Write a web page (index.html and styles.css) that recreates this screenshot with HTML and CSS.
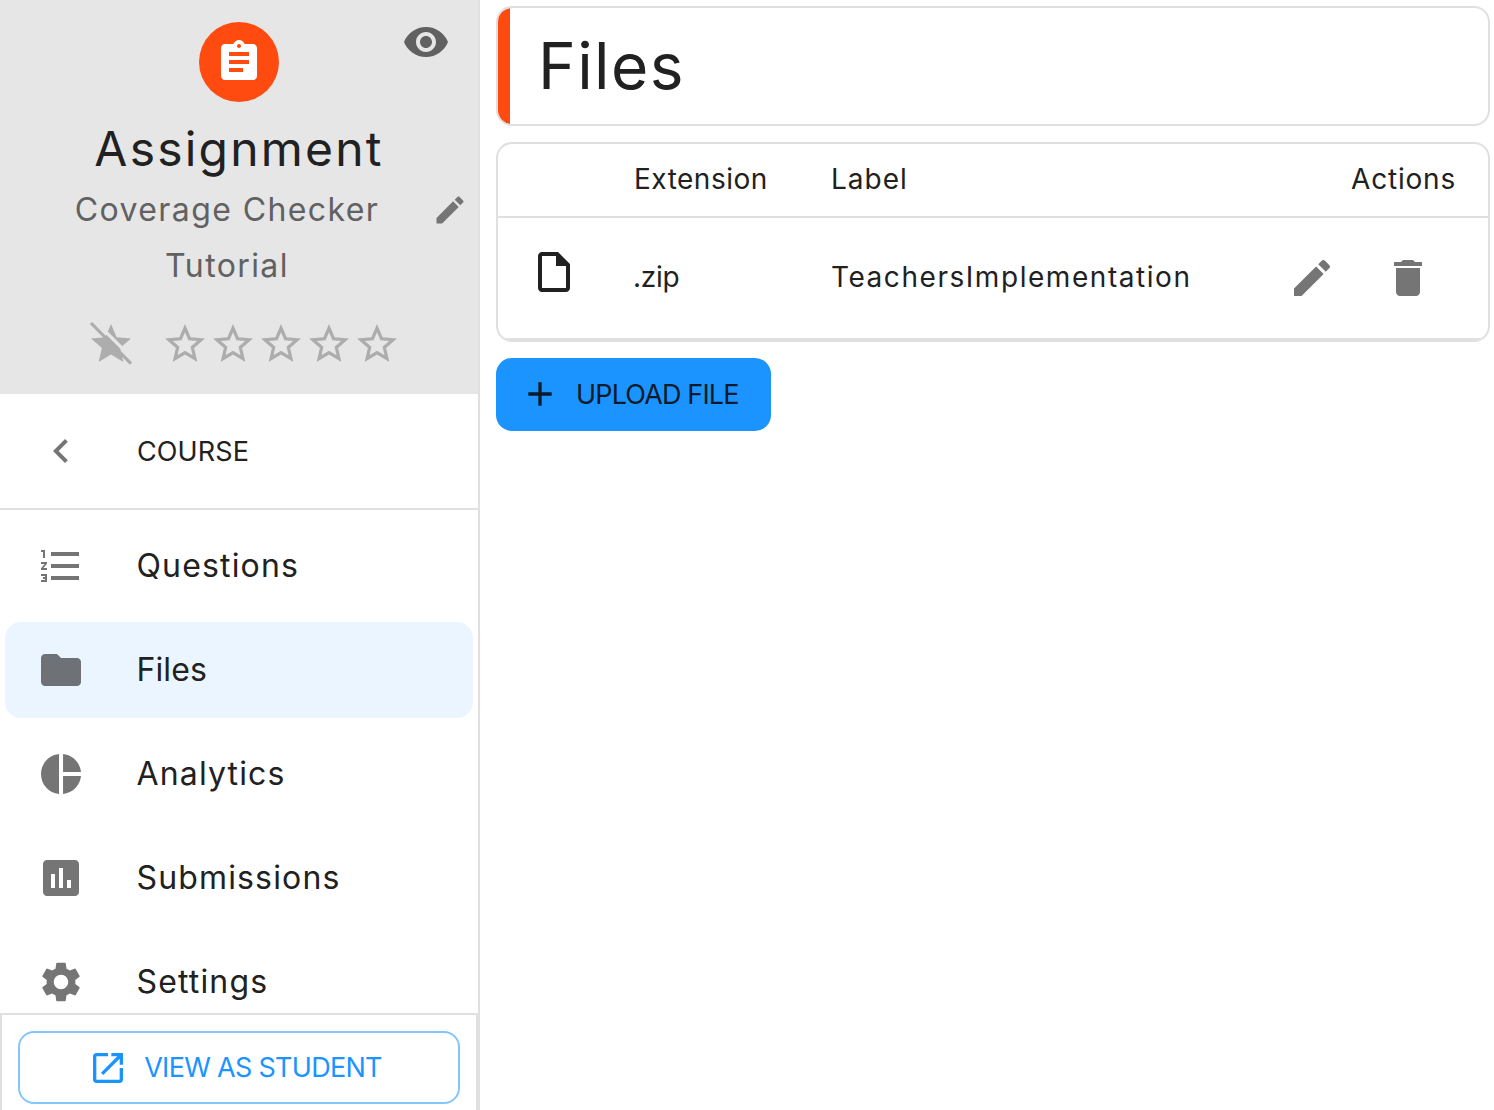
FILE: index.html
```html
<!DOCTYPE html>
<html lang="en">
    <head>
        <meta charset="UTF-8">
        <meta name="viewport" content="width=device-width, initial-scale=1.0">
        <title>Files</title>
        <link rel="stylesheet" href="styles.css">
    </head>
    <body>
        <div class="app">
            <aside class="sidebar">
                <div class="summary">
                    <div class="badge">
                        <svg class="icon" viewBox="0 0 24 24"><path d="M19 3h-4.18C14.4 1.84 13.3 1 12 1c-1.3 0-2.4.84-2.82 2H5c-1.1 0-2 .9-2 2v14c0 1.1.9 2 2 2h14c1.1 0 2-.9 2-2V5c0-1.1-.9-2-2-2zm-7 0c.55 0 1 .45 1 1s-.45 1-1 1-1-.45-1-1 .45-1 1-1zm2 14H7v-2h7v2zm3-4H7v-2h10v2zm0-4H7V7h10v2z"/></svg>
                    </div>
                    <svg class="icon eye" viewBox="0 0 24 24"><path d="M12 4.5C7 4.5 2.73 7.61 1 12c1.73 4.39 6 7.5 11 7.5s9.27-3.11 11-7.5c-1.73-4.39-6-7.5-11-7.5zM12 17c-2.76 0-5-2.24-5-5s2.24-5 5-5 5 2.24 5 5-2.24 5-5 5zm0-8c-1.66 0-3 1.34-3 3s1.34 3 3 3 3-1.34 3-3-1.34-3-3-3z"/></svg>
                    <h2 class="summary-title">Assignment</h2>
                    <div class="subject">
                        <div class="subject-text">
                            <div>Coverage Checker</div>
                            <div>Tutorial</div>
                        </div>
                        <svg class="icon subject-edit" viewBox="0 0 24 24"><path d="M3 17.25V21h3.75L17.81 9.94l-3.75-3.75L3 17.25zM20.71 7.04c.39-.39.39-1.02 0-1.41l-2.34-2.34c-.39-.39-1.02-.39-1.41 0l-1.83 1.83 3.75 3.75 1.83-1.83z"/></svg>
                    </div>
                    <div class="rating">
                        <svg class="icon star-off" viewBox="0 0 24 24">
                            <path d="M12 17.27L18.18 21l-1.64-7.03L22 9.24l-7.19-.61L12 2 9.19 8.63 2 9.24l5.46 4.73L5.82 21z"/>
                            <path class="slash-gap" d="M3.5 0L24.5 21"/>
                            <path class="slash" d="M2 1.5L22 21.8"/>
                        </svg>
                        <div class="stars">
                            <svg class="icon" viewBox="0 0 24 24"><path d="M22 9.24l-7.19-.62L12 2 9.19 8.63 2 9.24l5.46 4.73L5.82 21 12 17.27 18.18 21l-1.63-7.03L22 9.24zM12 15.4l-3.76 2.27 1-4.28-3.32-2.88 4.38-.38L12 6.1l1.71 4.04 4.38.38-3.32 2.88 1 4.28L12 15.4z"/></svg>
                            <svg class="icon" viewBox="0 0 24 24"><path d="M22 9.24l-7.19-.62L12 2 9.19 8.63 2 9.24l5.46 4.73L5.82 21 12 17.27 18.18 21l-1.63-7.03L22 9.24zM12 15.4l-3.76 2.27 1-4.28-3.32-2.88 4.38-.38L12 6.1l1.71 4.04 4.38.38-3.32 2.88 1 4.28L12 15.4z"/></svg>
                            <svg class="icon" viewBox="0 0 24 24"><path d="M22 9.24l-7.19-.62L12 2 9.19 8.63 2 9.24l5.46 4.73L5.82 21 12 17.27 18.18 21l-1.63-7.03L22 9.24zM12 15.4l-3.76 2.27 1-4.28-3.32-2.88 4.38-.38L12 6.1l1.71 4.04 4.38.38-3.32 2.88 1 4.28L12 15.4z"/></svg>
                            <svg class="icon" viewBox="0 0 24 24"><path d="M22 9.24l-7.19-.62L12 2 9.19 8.63 2 9.24l5.46 4.73L5.82 21 12 17.27 18.18 21l-1.63-7.03L22 9.24zM12 15.4l-3.76 2.27 1-4.28-3.32-2.88 4.38-.38L12 6.1l1.71 4.04 4.38.38-3.32 2.88 1 4.28L12 15.4z"/></svg>
                            <svg class="icon" viewBox="0 0 24 24"><path d="M22 9.24l-7.19-.62L12 2 9.19 8.63 2 9.24l5.46 4.73L5.82 21 12 17.27 18.18 21l-1.63-7.03L22 9.24zM12 15.4l-3.76 2.27 1-4.28-3.32-2.88 4.38-.38L12 6.1l1.71 4.04 4.38.38-3.32 2.88 1 4.28L12 15.4z"/></svg>
                        </div>
                    </div>
                </div>

                <a class="course-link" href="#">
                    <svg class="icon" viewBox="0 0 24 24"><path d="M15.41 7.41L14 6l-6 6 6 6 1.41-1.41L10.83 12z"/></svg>
                    <span>COURSE</span>
                </a>

                <nav class="nav">
                    <a class="nav-item" href="#">
                        <svg class="icon" viewBox="0 0 24 24"><path d="M2 17h2v.5H3v1h1v.5H2v1h3v-4H2v1zm1-9h1V4H2v1h1v3zm-1 3h1.8L2 13.1v.9h3v-1H3.2L5 10.9V10H2v1zm5-6v2h14V5H7zm0 14h14v-2H7v2zm0-6h14v-2H7v2z"/></svg>
                        <span>Questions</span>
                    </a>
                    <a class="nav-item active" href="#">
                        <svg class="icon" viewBox="0 0 24 24"><path d="M10 4H4c-1.1 0-1.99.9-1.99 2L2 18c0 1.1.9 2 2 2h16c1.1 0 2-.9 2-2V8c0-1.1-.9-2-2-2h-8l-2-2z"/></svg>
                        <span>Files</span>
                    </a>
                    <a class="nav-item" href="#">
                        <svg class="icon" viewBox="0 0 24 24"><path d="M11 2v20c-5.07-.5-9-4.79-9-10s3.93-9.5 9-10zm2.03 0v8.99H22c-.47-4.74-4.24-8.52-8.97-8.99zm0 11.01V22c4.74-.47 8.5-4.25 8.97-8.99h-8.97z"/></svg>
                        <span>Analytics</span>
                    </a>
                    <a class="nav-item" href="#">
                        <svg class="icon" viewBox="0 0 24 24"><path d="M19 3H5c-1.1 0-2 .9-2 2v14c0 1.1.9 2 2 2h14c1.1 0 2-.9 2-2V5c0-1.1-.9-2-2-2zM9 17H7v-7h2v7zm4 0h-2V7h2v10zm4 0h-2v-4h2v4z"/></svg>
                        <span>Submissions</span>
                    </a>
                    <a class="nav-item" href="#">
                        <svg class="icon" viewBox="0 0 24 24"><path d="M19.14 12.94c.04-.3.06-.61.06-.94 0-.32-.02-.64-.07-.94l2.03-1.58c.18-.14.23-.41.12-.61l-1.92-3.32c-.12-.22-.37-.29-.59-.22l-2.39.96c-.5-.38-1.03-.7-1.62-.94l-.36-2.54c-.04-.24-.24-.41-.48-.41h-3.84c-.24 0-.43.17-.47.41l-.36 2.54c-.59.24-1.13.57-1.62.94l-2.39-.96c-.22-.08-.47 0-.59.22L2.74 8.87c-.12.21-.08.47.12.61l2.03 1.58c-.05.3-.09.63-.09.94s.02.64.07.94l-2.03 1.58c-.18.14-.23.41-.12.61l1.92 3.32c.12.22.37.29.59.22l2.39-.96c.5.38 1.03.7 1.62.94l.36 2.54c.05.24.24.41.48.41h3.84c.24 0 .44-.17.47-.41l.36-2.54c.59-.24 1.13-.56 1.62-.94l2.39.96c.22.08.47 0 .59-.22l1.92-3.32c.12-.22.07-.47-.12-.61l-2.01-1.58zM12 15.6c-1.98 0-3.6-1.62-3.6-3.6s1.62-3.6 3.6-3.6 3.6 1.62 3.6 3.6-1.62 3.6-3.6 3.6z"/></svg>
                        <span>Settings</span>
                    </a>
                </nav>

                <div class="sidebar-footer">
                    <a class="student-button" href="#">
                        <svg class="icon" viewBox="0 0 24 24"><path d="M19 19H5V5h7V3H5c-1.11 0-2 .9-2 2v14c0 1.1.89 2 2 2h14c1.1 0 2-.9 2-2v-7h-2v7zM14 3v2h3.59l-9.83 9.83 1.41 1.41L19 6.41V10h2V3h-7z"/></svg>
                        <span>VIEW AS STUDENT</span>
                    </a>
                </div>
            </aside>

            <main class="content">
                <div class="page-title">
                    <div class="page-title-bar"></div>
                    <h1>Files</h1>
                </div>

                <div class="table-card">
                    <div class="table-row table-head">
                        <div></div>
                        <div>Extension</div>
                        <div class="label-head">Label</div>
                        <div class="actions-head">Actions</div>
                    </div>
                    <div class="table-row table-body">
                        <div class="file-cell">
                            <svg class="icon" viewBox="0 0 24 24"><path d="M14 2H6c-1.1 0-1.99.9-1.99 2L4 20c0 1.1.89 2 1.99 2H18c1.1 0 2-.9 2-2V8l-6-6zM6 20V4h7v5h5v11H6z"/></svg>
                        </div>
                        <div class="ext-cell">.zip</div>
                        <div class="label-cell">TeachersImplementation</div>
                        <div class="actions-cell">
                            <svg class="icon" viewBox="0 0 24 24"><path d="M3 17.25V21h3.75L17.81 9.94l-3.75-3.75L3 17.25zM20.71 7.04c.39-.39.39-1.02 0-1.41l-2.34-2.34c-.39-.39-1.02-.39-1.41 0l-1.83 1.83 3.75 3.75 1.83-1.83z"/></svg>
                            <svg class="icon" viewBox="0 0 24 24"><path d="M6 19c0 1.1.9 2 2 2h8c1.1 0 2-.9 2-2V7H6v12zM19 4h-3.5l-1-1h-5l-1 1H5v2h14V4z"/></svg>
                        </div>
                    </div>
                </div>

                <button class="upload-button">
                    <svg class="icon" viewBox="0 0 24 24"><path d="M19 13h-6v6h-2v-6H5v-2h6V5h2v6h6v2z"/></svg>
                    <span>UPLOAD FILE</span>
                </button>
            </main>
        </div>
    </body>
</html>
```

FILE: styles.css
```css
html, body{
    margin: 0;
    padding: 0;
    background: #fff;
    font-family: Inter, "Noto Sans", sans-serif;
    color: #212121;
}

a{
    text-decoration: none;
    color: inherit;
}

h1,h2{
    margin: 0;
    font-weight: 400;
}

.app{
    display: flex;
    height: 100vh;
    overflow: hidden;
}

.icon{
    display: block;
    flex: none;
    width: 48px;
    height: 48px;
    fill: #757575;
}

/* sidebar */
.sidebar{
    display: flex;
    flex-direction: column;
    flex: none;
    box-sizing: border-box;
    width: 480px;
    height: 100%;
    border-right: 2px solid #e0e0e0;
}

.summary{
    position: relative;
    flex: none;
    box-sizing: border-box;
    height: 394px;
    padding-top: 22px;
    background: #e6e6e6;
}

.badge{
    display: flex;
    justify-content: center;
    align-items: center;
    width: 80px;
    height: 80px;
    margin: 0 auto;
    border-radius: 50%;
    background: #ff4a10;
}

.badge .icon{
    fill: #fff;
}

.eye{
    position: absolute;
    top: 18px;
    left: 402px;
    fill: #616161;
}

.summary-title{
    margin-top: 19px;
    font-size: 48px;
    line-height: 56px;
    letter-spacing: 2.2px;
    text-align: center;
}

.subject{
    display: flex;
    align-items: flex-start;
    margin-top: 5px;
    padding-left: 24px;
}

.subject-text{
    width: 406px;
    font-size: 32px;
    line-height: 56px;
    letter-spacing: 1.4px;
    text-align: center;
    color: #616161;
}

.subject-edit{
    width: 36px;
    height: 36px;
    margin: 10px 0 0 2px;
}

.rating{
    display: flex;
    margin-top: 26px;
    padding-left: 87px;
}

.stars{
    display: flex;
    margin-left: 26px;
}

.rating .icon{
    fill: #adadad;
}

.star-off path.slash{
    fill: none;
    stroke: #adadad;
    stroke-width: 1.6;
}

.star-off path.slash-gap{
    fill: none;
    stroke: #e6e6e6;
    stroke-width: 1.6;
}

.course-link{
    display: flex;
    flex: none;
    align-items: center;
    gap: 52px;
    height: 114px;
    padding-left: 37px;
    border-bottom: 2px solid #e0e0e0;
    font-size: 27px;
    letter-spacing: 0.1px;
}

.nav{
    flex: 1;
    min-height: 0;
    overflow: hidden;
    padding-top: 8px;
}

.nav-item{
    display: flex;
    align-items: center;
    gap: 51.5px;
    box-sizing: border-box;
    width: 468px;
    height: 96px;
    margin: 0 0 8px 5px;
    padding-left: 32px;
    border-radius: 16px;
    font-size: 32px;
    letter-spacing: 1.15px;
}

.nav-item span{
    margin-bottom: 2px;
}

.nav-item.active{
    background: #ebf5ff;
    letter-spacing: 0.1px;
}

.nav-item.active .icon{
    fill: #6e7176;
}

.sidebar-footer{
    flex: none;
    box-sizing: border-box;
    height: 97px;
    padding: 16px 16px 0;
    border: 2px solid #e0e0e0;
    border-width: 2px 2px 0 2px;
    background: #fff;
}

.student-button{
    display: flex;
    justify-content: center;
    align-items: center;
    gap: 16px;
    box-sizing: border-box;
    height: 73px;
    padding-right: 8px;
    border: 2px solid #84c5ff;
    border-radius: 16px;
    font-size: 27px;
    letter-spacing: -0.7px;
    color: #1b94ff;
}

.student-button .icon{
    width: 40px;
    height: 40px;
    fill: #1b94ff;
}

/* main area */
.content{
    flex: 1;
    min-width: 0;
    padding: 6px 4px 0 16px;
}

.page-title{
    display: flex;
    align-items: center;
    overflow: hidden;
    box-sizing: border-box;
    height: 120px;
    border: 2px solid #e0e0e0;
    border-radius: 16px;
}

.page-title-bar{
    align-self: stretch;
    flex: none;
    width: 12px;
    background: #ff4a10;
}

.page-title h1{
    margin: 0 0 2px 28px;
    font-size: 64px;
    letter-spacing: 1.4px;
}

.table-card{
    overflow: hidden;
    box-sizing: border-box;
    height: 200px;
    margin-top: 16px;
    border: 2px solid #e0e0e0;
    border-radius: 16px;
    font-size: 28px;
    letter-spacing: 0.5px;
}

.table-row{
    display: grid;
    grid-template-columns: 136px 197px 1fr 216px;
    align-items: center;
}

.table-head{
    height: 72px;
    border-bottom: 2px solid #e0e0e0;
}

.table-head div,
.ext-cell,
.label-cell{
    margin-bottom: 2px;
}

.label-head{
    letter-spacing: 1px;
}

.actions-head{
    padding-right: 32px;
    letter-spacing: 0.8px;
    text-align: right;
}

.table-body{
    height: 120px;
    border-bottom: 2px solid #e0e0e0;
}

.file-cell{
    padding: 0 0 12px 32px;
}

.file-cell .icon{
    fill: #212121;
}

.ext-cell{
    margin-left: -1px;
    letter-spacing: -0.3px;
}

.label-cell{
    letter-spacing: 1.55px;
}

.actions-cell{
    display: flex;
    justify-content: flex-end;
    gap: 48px;
    padding-right: 56px;
}

.upload-button{
    display: flex;
    align-items: center;
    gap: 16px;
    box-sizing: border-box;
    width: 275px;
    height: 73px;
    margin-top: 16px;
    padding: 0 0 0 24px;
    border: none;
    border-radius: 16px;
    background: #1b94ff;
    font-family: inherit;
    font-size: 27px;
    letter-spacing: -0.85px;
    color: #0b1b2b;
}

.upload-button .icon{
    width: 40px;
    height: 40px;
    margin-bottom: 1px;
    fill: #0b1b2b;
}
```
